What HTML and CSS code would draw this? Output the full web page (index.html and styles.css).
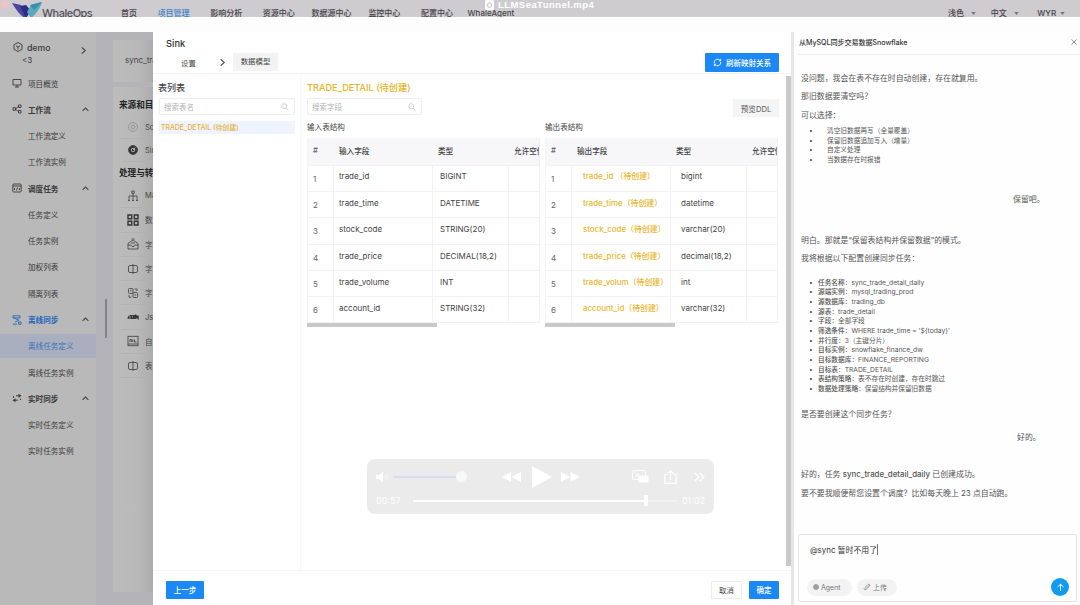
FILE: index.html
```html
<!DOCTYPE html>
<html lang="zh-CN">
<head>
  <meta charset="UTF-8" />
  <meta name="viewport" content="width=device-width, initial-scale=1" />
  <title>WhaleOps - 离线任务定义</title>
  <link rel="stylesheet" href="styles.css">
</head>
<body>

  <header class="topbar">
    <div class="logo">
      <svg width="30" height="16" viewBox="0 0 30 16">
        <path d="M0 1L9 3L15 15L13 16Q7 13 0 1Z" fill="#4a45a0" />
        <path d="M8 4L14 3L19 9L14 16Z" fill="#2c2c86" />
        <path d="M15 10L19 3L30 0Q27 10 19 16Z" fill="#5aa9be" />
        <path d="M18 3L30 0L22 8Z" fill="#348fa9" />
      </svg>
      <span>WhaleOps</span>
    </div>
    <nav class="top-nav">
      <a>首页</a>
      <a class="active">项目管理</a>
      <a>影响分析</a>
      <a class="narrow">资源中心</a>
      <a class="narrow">数据源中心</a>
      <a>监控中心</a>
      <a>配置中心</a>
      <a class="agent">WhaleAgent</a>
    </nav>
    <div class="top-user">
      <span>浅色<svg class="tri" viewBox="0 0 6 4"><path d="M0 0H6L3 4Z" /></svg></span>
      <span>中文<svg class="tri" viewBox="0 0 6 4"><path d="M0 0H6L3 4Z" /></svg></span>
      <span class="tight">WYR<svg class="tri" viewBox="0 0 6 4"><path d="M0 0H6L3 4Z" /></svg></span>
    </div>
  </header>

  <!-- 视频标题 -->
  <div class="video-title">
    <svg width="9" height="10" viewBox="0 0 9 10"><rect width="9" height="10" rx="1.5" fill="#fff" /><circle cx="4.5" cy="5.2" r="2.2" fill="none" stroke="#c4c2c4" /></svg>
    <span>LLMSeaTunnel.mp4</span>
  </div>
  <div class="close-dot"></div>

  <main class="layout">
    <aside class="sidebar">
      <div class="project">
        <svg class="ico" viewBox="0 0 10 10"><path d="M5 .5L9 2.7V7.3L5 9.5L1 7.3V2.7Z M3 3.8L5 5L7 3.8 M5 5V7.5" /></svg>
        <div class="project-name">demo<small>&lt;3</small></div>
        <svg class="chev" viewBox="0 0 6 6"><path d="M1.5 .3L4.5 3L1.5 5.7" /></svg>
      </div>
      <ul class="menu">
        <li><svg class="ico" viewBox="0 0 10 10"><path d="M1 1.5H9V7H1Z M3 9H7 M5 7V9" /></svg>项目概览</li>
        <li class="group"><svg class="ico" viewBox="0 0 10 10"><path d="M1 3.7H3.5V6.3H1Z M6.5 1H9V3.5H6.5Z M6.5 6.5H9V9H6.5Z M3.5 5L6.5 2.3 M3.5 5L6.5 7.7" /></svg>工作流<svg class="chev" viewBox="0 0 6 6"><path d="M.5 4.2L3 1.8L5.5 4.2" /></svg></li>
        <li class="sub">工作流定义</li>
        <li class="sub">工作流实例</li>
        <li class="group"><svg class="ico" viewBox="0 0 10 10"><rect x=".8" y="1" width="8.4" height="8" rx="1" /><path d="M1 3H9 M3 5L2 6L3 7 M5.5 4.5L4.5 7.5 M7 5L8 6L7 7" /></svg>调度任务<svg class="chev" viewBox="0 0 6 6"><path d="M.5 4.2L3 1.8L5.5 4.2" /></svg></li>
        <li class="sub">任务定义</li>
        <li class="sub">任务实例</li>
        <li class="sub">加权列表</li>
        <li class="sub">隔离列表</li>
        <li class="group blue"><svg class="ico" viewBox="0 0 10 10"><path d="M1 .8H8V3H1Z M2 3L7 5.2L3 7 M1 9.2H5 M6.5 7H9V9.2H6.5Z" /></svg>离线同步<svg class="chev" viewBox="0 0 6 6"><path d="M.5 4.2L3 1.8L5.5 4.2" /></svg></li>
        <li class="sub selected">离线任务定义</li>
        <li class="sub">离线任务实例</li>
        <li class="group"><svg class="ico" viewBox="0 0 10 10"><path d="M4 2.8H7.5 M1.5 3V5 M3 7.2H6 M8.5 7V5.5" /><path d="M6.5 .8L9.5 2.8L6.5 4.8Z M3.5 5.2L.5 7.2L3.5 9.2Z" fill="#3a3a3a" stroke="none" /></svg>实时同步<svg class="chev" viewBox="0 0 6 6"><path d="M.5 4.2L3 1.8L5.5 4.2" /></svg></li>
        <li class="sub">实时任务定义</li>
        <li class="sub">实时任务实例</li>
      </ul>
    </aside>

    <div class="gutter"><div class="thumb"></div></div>

    <!-- 被抽屉遮住的画布 -->
    <section class="canvas">
      <div class="card task-name">sync_tra</div>
      <div class="card palette">
        <h4>来源和目</h4>
        <ul>
          <li><svg class="node faint" viewBox="0 0 12 12"><circle cx="6" cy="6" r="4.5" /><circle cx="6" cy="6" r="1.8" /></svg>So</li>
          <li><svg class="node" viewBox="0 0 12 12"><circle cx="6" cy="6" r="4.5" fill="#333" /><circle cx="6" cy="6" r="1.8" stroke="#bbb" /><path d="M6 6L8.5 3.5" stroke="#bbb" /></svg>Sin</li>
        </ul>
        <h4>处理与转</h4>
        <ul>
          <li><svg class="node" viewBox="0 0 12 12"><path d="M4.8 1H7.2V3.4H4.8Z M6 3.4V10.5 M2 8V6H10V8 M2 8V10.5 M10 8V10.5 M1 10.5H3 M5 10.5H7 M9 10.5H11" /></svg>Ma</li>
          <li><svg class="node bold" viewBox="0 0 12 12"><path d="M1 1H4.7V4.7H1Z M7.3 1H11V4.7H7.3Z M1 7.3H4.7V11H1Z M7.3 7.3H11V11H7.3Z" /></svg>数</li>
          <li><svg class="node" viewBox="0 0 12 12"><path d="M1 5.5L6 2L11 5.5V11H1Z M1 7H4L5 8.5H7L8 7H11 M4 5H8 M4.5 1H7.5" /></svg>字</li>
          <li><svg class="node" viewBox="0 0 12 12"><rect x="1.5" y="2.5" width="9" height="7" rx="1.5" /><path d="M6 1V11" /></svg>字</li>
          <li><svg class="node" viewBox="0 0 12 12"><rect x="1.5" y="1.5" width="4.5" height="5" rx="1" /><rect x="6" y="5.5" width="4.5" height="5" rx="1" /><path d="M7.5 2H10V4 M2 8V10.2H4.5 M3 3.7H4.5 M7.5 8H9" /></svg>字</li>
          <li><svg class="node bold" viewBox="0 0 12 12"><path d="M.5 7H2V4.8 M3.2 7.2H5L3.8 4.8H5.5 M6.5 4.8H8V7.2H6.5Z M9.2 7.5V4.8L11 7.2V4.5" /></svg>Js</li>
          <li><svg class="node" viewBox="0 0 12 12"><rect x="1" y="1.3" width="10" height="9.4" /><path d="M1 9H11 M3 7V4.5H4.5V7 M6 7L5.8 4.5 M7.5 4.5V7H9.5" /></svg>自</li>
          <li><svg class="node" viewBox="0 0 12 12"><rect x="1.5" y="2.5" width="9" height="7" rx="1.5" /><path d="M6 1V11" /></svg>表</li>
        </ul>
      </div>
    </section>

    <section class="drawer">
      <div class="drawer-head">
        <h2>Sink</h2>
        <div class="steps">
          <span class="step">设置</span>
          <svg class="chev" viewBox="0 0 6 6"><path d="M1.5 .3L4.5 3L1.5 5.7" /></svg>
          <span class="step current">数据模型</span>
          <button class="primary refresh"><svg width="9" height="9" viewBox="0 0 10 10"><path d="M1.2 5.5A3.9 3.9 0 0 1 8.3 3 M8.8 4.5A3.9 3.9 0 0 1 1.7 7 M8.5 1V3.2H6.5 M1.5 9V6.8H3.5" /></svg>刷新映射关系</button>
        </div>
      </div>

      <div class="drawer-body">
        <div class="tables">
          <h3>表列表</h3>
          <div class="search">搜索表名<svg viewBox="0 0 8 8"><circle cx="3.2" cy="3.2" r="2.5" /><path d="M5 5L7.4 7.4" /></svg></div>
          <div class="table-item">TRADE_DETAIL (待创建)</div>
        </div>

        <div class="mapping">
          <h3 class="pending">TRADE_DETAIL (待创建)</h3>
          <div class="tools">
            <div class="search">搜索字段<svg viewBox="0 0 8 8"><circle cx="3.2" cy="3.2" r="2.5" /><path d="M5 5L7.4 7.4" /></svg></div>
            <button class="ddl">预览DDL</button>
          </div>
          <div class="grids">
            <div class="grid-wrap">
              <h5>输入表结构</h5>
              <div class="grid">
                <div class="row head"><span>#</span><span>输入字段</span><span>类型</span><span>允许空值</span></div>
                <div class="row"><span>1</span><span>trade_id</span><span>BIGINT</span><span></span></div>
                <div class="row"><span>2</span><span>trade_time</span><span>DATETIME</span><span></span></div>
                <div class="row"><span>3</span><span>stock_code</span><span>STRING(20)</span><span></span></div>
                <div class="row"><span>4</span><span>trade_price</span><span>DECIMAL(18,2)</span><span></span></div>
                <div class="row"><span>5</span><span>trade_volume</span><span>INT</span><span></span></div>
                <div class="row"><span>6</span><span>account_id</span><span>STRING(32)</span><span></span></div>
              </div>
              <div class="hscroll"></div>
            </div>
            <div class="grid-wrap output">
              <h5>输出表结构</h5>
              <div class="grid">
                <div class="row head"><span>#</span><span>输出字段</span><span>类型</span><span>允许空值</span></div>
                <div class="row"><span>1</span><span>trade_id （待创建）</span><span>bigint</span><span></span></div>
                <div class="row"><span>2</span><span>trade_time（待创建）</span><span>datetime</span><span></span></div>
                <div class="row"><span>3</span><span>stock_code（待创建）</span><span>varchar(20)</span><span></span></div>
                <div class="row"><span>4</span><span>trade_price（待创建）</span><span>decimal(18,2)</span><span></span></div>
                <div class="row"><span>5</span><span>trade_volum（待创建）</span><span>int</span><span></span></div>
                <div class="row"><span>6</span><span>account_id（待创建）</span><span>varchar(32)</span><span></span></div>
              </div>
              <div class="hscroll"></div>
            </div>
          </div>
        </div>
        <div class="vscroll"></div>
      </div>

      <div class="drawer-foot">
        <button class="primary">上一步</button>
        <button class="cancel">取消</button>
        <button class="primary ok">确定</button>
      </div>
    </section>

    <section class="chat">
      <div class="chat-head">从MySQL同步交易数据Snowflake
        <svg width="6" height="6" viewBox="0 0 6 6"><path d="M.5 .5L5.5 5.5 M5.5 .5L.5 5.5" /></svg>
      </div>
      <div class="messages">
        <p>没问题，我会在表不存在时自动创建，存在就复用。</p>
        <p>那旧数据要清空吗？</p>
        <p>可以选择：</p>
        <ul class="options">
          <li>清空旧数据再写（全量覆盖）</li>
          <li>保留旧数据追加写入（增量）</li>
          <li>自定义处理</li>
          <li>当数据存在时报错</li>
        </ul>
        <p class="me">保留吧。</p>
        <p>明白。那就是“保留表结构并保留数据”的模式。</p>
        <p>我将根据以下配置创建同步任务：</p>
        <ul class="config">
          <li><b>任务名称</b>：sync_trade_detail_daily</li>
          <li><b>源端实例</b>：mysql_trading_prod</li>
          <li><b>源数据库</b>：trading_db</li>
          <li><b>源表</b>：trade_detail</li>
          <li><b>字段</b>：全部字段</li>
          <li><b>筛选条件</b>：WHERE trade_time = '${today}'</li>
          <li><b>并行度</b>：3（主键分片）</li>
          <li><b>目标实例</b>：snowflake_finance_dw</li>
          <li><b>目标数据库</b>：FINANCE_REPORTING</li>
          <li><b>目标表</b>：TRADE_DETAIL</li>
          <li><b>表结构策略</b>：表不存在时创建，存在时跳过</li>
          <li><b>数据处理策略</b>：保留结构并保留旧数据</li>
        </ul>
        <p>是否要创建这个同步任务？</p>
        <p class="me second">好的。</p>
        <p>好的，任务 <b>sync_trade_detail_daily</b> 已创建成功。</p>
        <p>要不要我顺便帮您设置个调度？比如每天晚上 23 点自动跑。</p>
      </div>
      <div class="composer">
        <div class="typed">@sync 暂时不用了<i class="caret"></i></div>
        <div class="composer-tools">
          <span class="pill"><svg width="6" height="6" viewBox="0 0 6 6"><circle cx="3" cy="3" r="2.5" fill="#aaa" /><path d="M1.5 3H4.5" /></svg>Agent</span>
          <span class="pill"><svg width="8" height="8" viewBox="0 0 8 8"><path d="M2 6.5L6.5 2 M1 5.5L5 1.5Q6.5 .5 7 2Q7 3 3 6.7Q1.5 7.5 1 5.5" /></svg>上传</span>
          <button class="send"><svg width="9" height="9" viewBox="0 0 9 9"><path d="M4.5 8V1.2 M1.5 4L4.5 1.2L7.5 4" /></svg></button>
        </div>
      </div>
    </section>
  </main>

  <!-- 播放器控制条 -->
  <div class="player">
    <div class="controls">
      <svg class="speaker" width="14" height="10" viewBox="0 0 14 10"><path d="M0 3H3L7 0V10L3 7H0Z" fill="#fff" /><path d="M9 3Q10.5 5 9 7 M11 2Q13.5 5 11 8" stroke="#f5f5f5" fill="none" /></svg>
      <div class="volume"><i></i></div>
      <svg class="rewind" width="19" height="12" viewBox="0 0 19 12"><path d="M9 1V11L0 6Z M19 1V11L9.5 6Z" fill="#fff" /></svg>
      <svg class="play" width="20" height="22" viewBox="0 0 20 22"><path d="M0 0L20 11L0 22Z" fill="#fff" /></svg>
      <svg class="forward" width="19" height="12" viewBox="0 0 19 12"><path d="M0 1L9 6L0 11Z M9.5 1L19 6L9.5 11Z" fill="#fff" /></svg>
      <svg class="pip" width="17" height="13" viewBox="0 0 17 13"><rect x=".5" y=".5" width="13" height="9" rx="1" fill="none" stroke="#fff" /><path d="M3 3L6 6 M3 6H6V3" stroke="#fff" fill="none" /><rect x="6.5" y="5.5" width="10" height="7" rx="1" fill="#fff" /></svg>
      <svg class="share" width="13" height="14" viewBox="0 0 13 14"><path d="M3.5 4.5H.8V13.3H12.2V4.5H9.5 M6.5 10V1 M3.5 3.5L6.5 .8L9.5 3.5" fill="none" stroke="#fff" stroke-width="1.2" /></svg>
      <svg class="more" width="11" height="10" viewBox="0 0 11 10"><path d="M.8 1L5 5L.8 9 M5.8 1L10 5L5.8 9" fill="none" stroke="#fff" stroke-width="1.3" /></svg>
    </div>
    <div class="progress">
      <span>00:57</span>
      <div class="track"><div class="played"></div></div>
      <span>01:02</span>
    </div>
  </div>

</body>
</html>
```

FILE: styles.css
```css
* {
  box-sizing: border-box;
}
body {
  margin: 0;
  width: 1080px;
  height: 605px;
  overflow: hidden;
  position: relative;
  font-family: Inter, "Noto Sans CJK SC", sans-serif;
  font-size: 8px;
  color: #444;
  background: #fdfdfd;
}
h2, h3, h4, h5, p, ul {
  margin: 0;
  padding: 0;
  font-weight: normal;
}
ul {
  list-style: none;
}
button {
  font: inherit;
  border: none;
  padding: 0;
}
svg {
  fill: none;
  flex: none;
}

/* 顶部导航 */
.topbar {
  height: 17px;
  background: #cecccf;
  display: flex;
  overflow: hidden;
  color: #454348;
  line-height: 26px;
  font-weight: 500;
}
.logo {
  width: 121px;
  padding-left: 12px;
  display: flex;
}
.logo svg {
  margin-top: 2px;
}
.logo span {
  font-size: 11px;
  letter-spacing: -0.5px;
  line-height: 26px;
  color: #55535a;
}
.top-nav {
  display: flex;
  flex: 1;
}
.top-nav a {
  margin-right: 20.6px;
}
.top-nav .narrow {
  margin-right: 16.8px;
}
.top-nav .active {
  color: #3f86cb;
}
.top-nav .agent {
  margin-left: -6px;
}
.top-user {
  display: flex;
  width: 132px;
}
.top-user span {
  width: 44px;
}
.top-user span:nth-child(2) {
  width: 48px;
}
.tri {
  width: 5px;
  height: 3px;
  margin-left: 7px;
  vertical-align: 1px;
  fill: #77757a;
}
.tight .tri {
  margin-left: 4px;
}
.video-title {
  position: absolute;
  left: 485px;
  top: 0;
  display: flex;
  gap: 4px;
  color: #fff;
  font: bold 9.5px/10px "Liberation Sans", sans-serif;
  letter-spacing: 0.45px;
}
.close-dot {
  position: absolute;
  left: 1px;
  top: 0;
  width: 8px;
  height: 9px;
  border-radius: 50%;
  background: #efc3c5;
}

.layout {
  margin-top: 15px;
  height: 573px;
  display: grid;
  grid-template-columns: 96px 17px 40px 638px 289px;
}

/* 侧边栏 */
.sidebar {
  background: #b9b9b9;
  color: #3a3a3a;
  min-width: 0;
}
.project {
  height: 38px;
  display: flex;
  padding: 10px 9px 0 13px;
}
.project-name {
  flex: 1;
  margin-left: 4px;
  font-size: 8.7px;
  line-height: 12px;
  font-weight: 500;
}
.project-name small {
  display: block;
  font-size: 8px;
  margin-left: -5px;
  line-height: 13px;
  font-weight: normal;
}
.project .chev {
  margin-top: 5px;
}
.ico {
  width: 10px;
  height: 10px;
  stroke: currentColor;
  stroke-width: 0.9;
}
.chev {
  width: 7px;
  height: 7px;
  stroke: #444;
  stroke-width: 0.9;
}
.menu li {
  height: 26.28px;
  display: flex;
  align-items: center;
  padding: 0 7px 0 12px;
  font-size: 7.6px;
}
.menu .ico {
  margin-right: 6px;
}
.menu .chev {
  margin-left: auto;
}
.menu .group {
  font-weight: 600;
}
.menu .sub {
  padding-left: 28px;
}
.menu .blue {
  color: #2767bd;
}
.menu .selected {
  height: 24px;
  margin: 1.14px 0;
  color: #3b70bd;
  background: #a9afbe;
}
.gutter {
  background: #b4b3b9;
}
.thumb {
  width: 2px;
  height: 39px;
  margin: 267px 0 0 9px;
  background: #838288;
}

/* 画布 */
.canvas {
  overflow: hidden;
  background: #b4b3b8;
  padding-top: 8px;
  white-space: nowrap;
  color: #444;
}
.card {
  background: linear-gradient(90deg, #bcbcbc, #b9b9b9 60%, #acacac);
}
.task-name {
  height: 42px;
  line-height: 40px;
  padding-left: 12px;
}
.palette {
  height: 505px;
  margin-top: 5px;
  padding: 7px 0 0 6px;
}
.palette h4 {
  font-size: 8.6px;
  line-height: 22px;
  font-weight: 600;
  color: #222;
}
.palette li {
  height: 24.3px;
  display: flex;
  align-items: center;
  margin-left: 2px;
  padding-left: 6px;
  font-size: 7.5px;
  border-bottom: 1px solid #b1b1b1;
}
.palette ul:first-of-type li {
  height: 23px;
}
.node {
  width: 12px;
  height: 12px;
  margin-right: 6px;
  stroke: #4a4a4a;
  stroke-width: 0.9;
}
.node.faint {
  stroke: #949494;
}
.node.bold {
  stroke: #333;
  stroke-width: 1.4;
}

/* 抽屉 */
.drawer {
  background: #fff;
  display: flex;
  flex-direction: column;
}
.drawer-head {
  height: 42px;
  padding: 5px 12px 0 13px;
  border-bottom: 1px solid #f3f3f3;
}
.drawer-head h2 {
  font-size: 9.4px;
  line-height: 13px;
  font-weight: 500;
  color: #333;
}
.steps {
  display: flex;
  align-items: center;
  margin-top: 2px;
  height: 20px;
}
.step {
  width: 53px;
  padding-left: 15px;
  font-size: 7.4px;
  color: #444;
}
.step.current {
  width: 45px;
  margin-left: 7px;
  padding: 0;
  text-align: center;
  line-height: 18px;
  background: #f3f3f3;
}
.primary {
  height: 18px;
  width: 38px;
  background: #1c88f5;
  color: #fff;
  font-size: 7.5px;
  font-weight: 500;
  border-radius: 1px;
}
.refresh {
  width: 74px;
  height: 19px;
  margin-left: auto;
  display: flex;
  align-items: center;
  justify-content: center;
  gap: 4px;
}
.refresh svg {
  stroke: #fff;
}
.drawer-body {
  flex: 1;
  display: flex;
}
.tables {
  width: 148px;
  padding: 5px 5px 0 6px;
  border-right: 1px solid #f8f8f8;
}
.tables h3 {
  font-size: 9px;
  line-height: 17px;
  margin-left: -1px;
  font-weight: 500;
  color: #444;
}
.search {
  height: 17px;
  display: flex;
  align-items: center;
  justify-content: space-between;
  margin-top: 2px;
  padding: 0 5px 0 4px;
  border: 1px solid #ededed;
  border-radius: 2px;
  color: #b3b3b3;
  font-size: 7.5px;
}
.search svg {
  width: 8px;
  height: 8px;
  stroke: #bbb;
  stroke-width: 0.7;
}
.table-item {
  height: 13px;
  margin-top: 6px;
  padding-left: 2px;
  line-height: 13px;
  font-size: 6.9px;
  font-weight: 500;
  color: #e5b43c;
  background: #eef3fd;
}
.mapping {
  width: 478px;
  padding: 5px 0 0 6px;
}
.mapping h3 {
  font-size: 9.2px;
  line-height: 18px;
  color: #e6b422;
  font-weight: 500;
}
.tools {
  display: flex;
  justify-content: space-between;
}
.tools .search {
  width: 115px;
  margin-top: 1px;
}
.ddl {
  width: 46px;
  height: 18px;
  margin-top: 2px;
  background: #f5f5f5;
  font-size: 7.6px;
  color: #555;
}
.grids {
  display: flex;
  gap: 5px;
}
.grid-wrap {
  width: 233px;
}
.grid-wrap h5 {
  font-size: 7.6px;
  line-height: 21px;
  color: #444;
}
.grid {
  overflow: hidden;
  border-left: 1px solid #f4f4f4;
  border-right: 1px solid #f0f0f0;
}
.row {
  display: grid;
  grid-template-columns: 26px 99px 76px 60px;
  width: 261px;
  height: 26.2px;
  line-height: 23px;
  border-bottom: 1px solid #f2f2f2;
}
.row:nth-child(2) {
  line-height: 21px;
}
.row span {
  padding-left: 5px;
  border-right: 1px solid #f2f2f2;
  white-space: nowrap;
}
.row span:first-child {
  line-height: 26px;
  color: #666;
}
.row span:nth-child(3) {
  padding-left: 7px;
}
.row.head {
  height: 28px;
  line-height: 27px;
  background: #f7f7fa;
  font-size: 7.6px;
  font-weight: 500;
}
.row.head span {
  padding-left: 5px;
  border-color: transparent;
}
.output .row:not(.head) span:nth-child(2) {
  padding-left: 11px;
  color: #e9b62f;
  font-weight: 500;
  font-size: 7.9px;
}
.output .row:not(.head) span:nth-child(3) {
  padding-left: 10px;
}
.hscroll {
  width: 130px;
  height: 4px;
  background: #c9c9c9;
}
.vscroll {
  width: 5px;
  height: 490px;
  margin-left: 7px;
  margin-top: 2px;
  background: #c9c9c9;
}
.drawer-foot {
  height: 35px;
  display: flex;
  align-items: center;
  padding: 3px 12px 0 13px;
  border-top: 1px solid #f5f5f5;
}
.cancel {
  width: 31px;
  height: 18px;
  margin-left: auto;
  margin-right: 7px;
  background: #fff;
  border: 1px solid #ededed;
  color: #444;
  font-size: 7.4px;
}
.primary.ok {
  width: 30px;
}

/* 对话 */
.chat {
  border-left: 3px solid #e6e6e6;
  padding-left: 4px;
  display: flex;
  flex-direction: column;
  background: #fefefe;
}
.chat-head {
  height: 23px;
  padding: 0 3px 2px 1px;
  display: flex;
  align-items: center;
  justify-content: space-between;
  font-size: 7.1px;
  font-weight: 500;
  letter-spacing: -0.06px;
  color: #333;
  border-bottom: 1px solid #eee;
}
.chat-head svg {
  stroke: #777;
  stroke-width: 0.8;
}
.messages {
  flex: 1;
  padding: 14px 0 0 3px;
  font-size: 7.9px;
  color: #555;
}
.messages p {
  line-height: 18.3px;
  white-space: nowrap;
}
.messages li {
  font-size: 6.7px;
  line-height: 9.68px;
  white-space: nowrap;
}
.messages li::before {
  content: "•";
  display: inline-block;
  width: 9px;
}
.messages .options {
  margin-top: 3px;
  padding-left: 8px;
}
.options li::before {
  width: 18px;
}
.messages .config {
  margin: 11px 0 10px;
  padding-left: 8px;
}
.messages .me {
  margin: 24px 0 23px;
  padding-left: 212px;
}
.messages .me.second {
  margin: 5px 0 19px;
  padding-left: 216px;
}
.messages b {
  font-weight: 500;
}
.composer {
  height: 68px;
  margin: 0 3px 3px 0;
  padding: 6px 7px 0 8px;
  border: 1px solid #e4e4e4;
  border-radius: 2px;
}
.typed {
  display: flex;
  align-items: center;
  height: 16px;
  padding-left: 3px;
  font-size: 7.9px;
  color: #333;
}
.caret {
  width: 1px;
  height: 11px;
  background: #777;
}
.composer-tools {
  display: flex;
  align-items: center;
  height: 18px;
  margin-top: 21px;
  gap: 5px;
}
.pill {
  width: 45px;
  height: 17px;
  display: flex;
  align-items: center;
  gap: 2px;
  padding-left: 6px;
  border-radius: 9px;
  background: #f3f3f3;
  color: #777;
  font-size: 7px;
}
.pill + .pill {
  width: 40px;
}
.pill svg {
  stroke: #888;
  stroke-width: 0.7;
}
.send {
  width: 18px;
  height: 18px;
  margin-left: auto;
  display: flex;
  align-items: center;
  justify-content: center;
  border-radius: 50%;
  background: #119bef;
}
.send svg {
  stroke: #fff;
}

/* 播放器 */
.player {
  position: absolute;
  left: 367px;
  top: 459px;
  width: 347px;
  height: 55px;
  border-radius: 8px;
  background: #ebebeb;
  color: #fff;
  padding: 5px 9px 0 9px;
}
.controls {
  display: flex;
  align-items: center;
  height: 25px;
}
.volume {
  width: 74px;
  height: 2px;
  margin: 0 35px 0 3px;
  background: #d3dfec;
  display: flex;
  align-items: center;
  justify-content: flex-end;
}
.volume i {
  width: 11px;
  height: 11px;
  border-radius: 50%;
  background: #f8f8f8;
}
.play {
  margin: 0 9px 0 11px;
}
.pip {
  margin-left: auto;
}
.share {
  margin: 0 17px 0 15px;
}
.progress {
  display: flex;
  align-items: center;
  height: 23px;
  font-size: 9px;
}
.track {
  flex: 1;
  margin: 0 4px 0 12px;
  background: #f0f0f0;
}
.played {
  width: 235px;
  height: 2px;
  background: #fff;
  display: flex;
  align-items: center;
  justify-content: flex-end;
}
.played::after {
  content: "";
  width: 4px;
  height: 11px;
  flex: none;
  background: #fff;
}
```
